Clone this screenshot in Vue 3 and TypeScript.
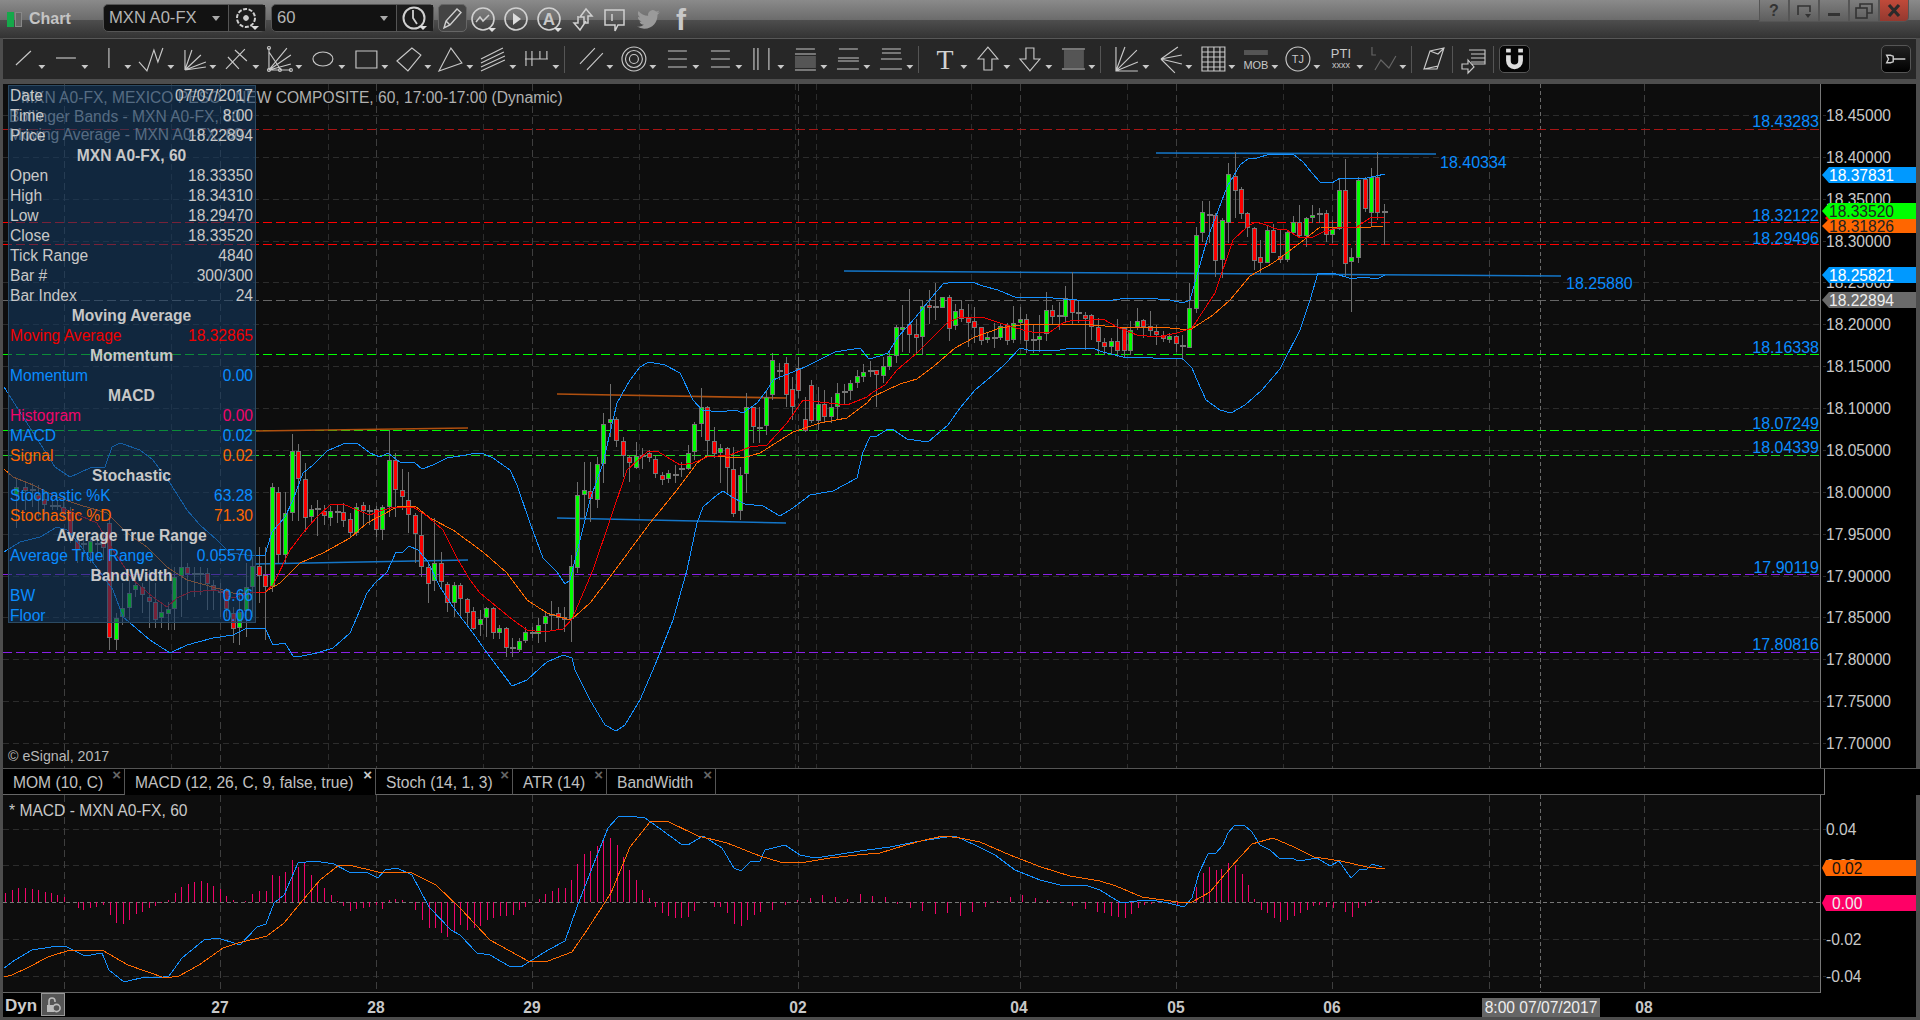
<template>
  <div class="app">
    <header class="titlebar">
      <div class="logo"><i class="logo-on"></i><i class="logo-off"></i></div>
      <span class="title">Chart</span>
      <div class="combo">
        <span class="combo-text">MXN A0-FX</span>
        <i class="caret"></i>
        <span class="combo-btn">
          <svg width="30" height="28" viewBox="0 0 30 28" class="ticon">
            <circle cx="14" cy="14" r="9" stroke-dasharray="4 1.6" stroke-width="2" />
            <circle cx="14" cy="14" r="2.4" fill="#ccc" />
            <path d="M19 22h8l-4 4z" class="fillc" />
          </svg>
        </span>
      </div>
      <div class="combo">
        <span class="combo-text">60</span>
        <i class="caret"></i>
        <span class="combo-btn">
          <svg width="30" height="28" viewBox="0 0 30 28" class="ticon">
            <circle cx="14" cy="14" r="10.5" stroke-width="2" />
            <path d="M13 6v8l4 6" stroke-width="1.8" />
            <path d="M19 22h8l-4 4z" class="fillc" />
          </svg>
        </span>
      </div>
      <div class="pencil">
        <svg width="29" height="28" viewBox="0 0 29 28" class="ticon">
          <path d="M6 24l2-7L19 5l4 3.5L12 21zM8 17l4 4" stroke-width="1.4" />
        </svg>
      </div>
      <svg v-for="t in titleIcons" :key="t.name" width="33" height="28" viewBox="0 0 33 28" class="ticon">
        <circle v-if="t.ring" cx="16" cy="14" r="11" stroke-width="1.6" />
        <path v-if="t.d" :d="t.d" stroke-width="1.5" />
        <path v-if="t.fill" :d="t.fill" class="fillc" />
        <text v-if="t.txt" x="16" :y="t.ty" class="ticon-text" :font-size="t.ts">{{ t.txt }}</text>
        <g v-if="t.bird" transform="translate(5 3) scale(.95)"><path :d="birdPath" class="bird" /></g>
      </svg>
      <div class="winbtns">
        <span class="winbtn"><b>?</b></span>
        <span class="winbtn">
          <svg width="18" height="16" viewBox="0 0 18 16" class="wicon"><path d="M3 12V3h12v6" /><path d="M10 11h6l-3 4z" fill="#333" stroke="none" /></svg>
        </span>
        <span class="winbtn">
          <svg width="18" height="16" viewBox="0 0 18 16"><rect x="3" y="10" width="12" height="3" fill="#333" /></svg>
        </span>
        <span class="winbtn">
          <svg width="20" height="18" viewBox="0 0 20 18" class="wicon"><rect x="2" y="6" width="11" height="10" /><path d="M6 6V2h12v9h-5" /></svg>
        </span>
        <span class="winbtn closebtn">
          <svg width="18" height="16" viewBox="0 0 18 16"><path d="M4 2l10 11M14 2L4 13" stroke="#2a2a2a" stroke-width="3.2" /></svg>
        </span>
      </div>
    </header>

    <nav class="toolbar">
      <template v-for="(t, i) in tools" :key="i">
        <i v-if="t.sep" class="tsep"></i>
        <svg v-else :width="t.bare ? 30 : 42.85" height="34" :viewBox="t.bare ? '6 0 30 34' : '0 0 43 34'" class="tool" :class="{ dim: t.dim }">
          <path v-if="t.fill" :d="t.fill" class="tool-fill" />
          <path v-if="t.d" :d="t.d" />
          <circle v-for="(c, j) in t.circles || []" :key="j" :cx="c[0]" :cy="c[1]" :r="c[2]" />
          <text v-for="(x, j) in t.texts || []" :key="j" :x="x.x" :y="x.y" :font-size="x.size" :class="x.cls" text-anchor="middle">{{ x.s }}</text>
          <path v-if="!t.bare" d="M36.5 23h7l-3.5 4z" class="tool-caret" />
        </svg>
      </template>
      <div class="magnet">
        <svg width="31" height="28" viewBox="0 0 31 28">
          <path d="M9 10v6a6.5 6.5 0 0 0 13 0v-6" fill="none" stroke="#ddd" stroke-width="5" />
          <rect x="6.5" y="3" width="5" height="4" fill="#ddd" />
          <rect x="19.5" y="3" width="5" height="4" fill="#ddd" />
        </svg>
      </div>
      <div class="pin">
        <svg width="30" height="28" viewBox="0 0 30 28" fill="none" stroke="#ccc" stroke-width="1.5">
          <path d="M5 10h4l3 1v6l-3 1H5l2-4zM12 14h13" />
        </svg>
      </div>
    </nav>

    <div class="panes">
      <section class="main-pane">
        <svg class="plot" width="1913" height="684" viewBox="3 84 1913 684">
          <rect x="3" y="84" width="1817" height="684" fill="#0d0d0d" />
          <rect x="1821" y="84" width="95" height="684" fill="#000" />
          <g shape-rendering="crispEdges">
            <line v-for="y in priceGrid" :key="'g' + y.y" x1="3" x2="1826" :y1="y.y" :y2="y.y" class="grid" />
            <line v-for="x in minorV" :key="'v' + x" :x1="x" :x2="x" y1="84" y2="768" class="grid" />
            <line v-for="x in majorV" :key="'m' + x" :x1="x" :x2="x" y1="84" y2="768" class="grid-major" />
            <line x1="1540" x2="1540" y1="84" y2="768" class="grid-cross" />
            <line v-for="l in levels" :key="l.y" x1="3" x2="1820" :y1="l.y" :y2="l.y" :stroke="l.color" stroke-dasharray="9 4" />
          </g>
          <line v-for="(l, i) in trendLines" :key="'t' + i" :x1="l[0]" :y1="l[1]" :x2="l[2]" :y2="l[3]" :stroke="l[4]" stroke-width="1.6" />
          <g shape-rendering="crispEdges">
            <g v-for="c in candles" :key="c.x">
              <line :x1="c.x" :x2="c.x" :y1="c.hi" :y2="c.lo" stroke="#6f6f6f" />
              <rect v-if="c.kind === 'd'" :x="c.x - 3" :y="c.top" width="6" height="2" fill="#777" />
              <rect v-else :x="c.x - 2" :y="c.top" width="4" :height="c.bot - c.top" :fill="c.kind === 'g' ? '#00ff00' : '#ff0000'" stroke="#777" />
            </g>
          </g>
          <polyline :points="upperBand" class="curve blue" />
          <polyline :points="lowerBand" class="curve blue" />
          <polyline :points="orangeMa" class="curve orange" />
          <polyline :points="redMa" class="curve red" />
          <text x="21" y="103" class="under">MXN A0-FX, MEXICO PESO - NEW COMPOSITE, 60, 17:00-17:00 (Dynamic)</text>
          <text x="9" y="121.5" class="under">Bollinger Bands - MXN A0-FX, 60</text>
          <text x="9" y="139.5" class="under">Moving Average - MXN A0-FX, 60</text>
          <text v-for="l in labelledLevels" :key="'lbl' + l.label" x="1819" :y="l.ty" class="level-label" text-anchor="end">{{ l.label }}</text>
          <text x="1440" y="167.5" class="level-label">18.40334</text>
          <text x="1566" y="288.5" class="level-label">18.25880</text>
          <text x="8" y="761" class="copy">© eSignal, 2017</text>
          <text v-for="y in priceGrid" :key="'a' + y.y" x="1826" :y="y.y + 5.5" class="axis-label">{{ y.label }}</text>
          <line x1="1820.5" x2="1820.5" y1="84" y2="768" stroke="#777" />
          <path d="M1825 218l3-3 3 3-3 3z" fill="#f00" />
          <g v-for="t in tags" :key="t.label">
            <path :d="`M1822 ${t.y + t.h / 2}l7-${t.h / 2}h87v${t.h}h-87z`" :fill="t.color" />
            <text x="1829" :y="t.y + t.h / 2 + 5.5" class="tag-text" :fill="t.ink">{{ t.label }}</text>
          </g>
        </svg>
        <aside class="readout">
          <div v-for="r in readout" :key="r.label + r.value" class="row" :class="{ head: !r.value }" :style="{ color: r.color }">
            <span>{{ r.label }}</span><span>{{ r.value }}</span>
          </div>
        </aside>
      </section>

      <div class="tabs">
        <div v-for="t in tabs" :key="t.label" class="tab" :class="{ active: t.active }" :style="{ width: t.w + 'px' }">
          {{ t.label }}<b class="tab-x">×</b>
        </div>
        <div class="tabs-rest"></div>
        <div class="tabs-axis"></div>
      </div>

      <section class="macd-pane">
        <svg width="1913" height="198" viewBox="3 795 1913 198">
          <rect x="3" y="795" width="1817" height="198" fill="#0d0d0d" />
          <rect x="1821" y="795" width="95" height="198" fill="#000" />
          <g shape-rendering="crispEdges">
            <line v-for="y in macdGrid" :key="'mg' + y.y" x1="3" x2="1826" :y1="y.y" :y2="y.y" class="grid" />
            <line x1="3" x2="1826" y1="902" y2="902" class="zero" />
            <line v-for="x in majorV" :key="'mv' + x" :x1="x" :x2="x" y1="795" y2="993" class="grid-major" />
            <line x1="1540" x2="1540" y1="795" y2="993" class="grid-cross" />
            <line v-for="b in histogram" :key="b[0]" :x1="b[0]" :x2="b[0]" y1="902" :y2="b[1]" stroke="#f0056a" />
          </g>
          <polyline :points="macdLine" class="curve blue" />
          <polyline :points="signalLine" class="curve orange" />
          <text x="9" y="816" class="axis-label">* MACD - MXN A0-FX, 60</text>
          <text v-for="y in macdGrid" :key="'ma' + y.y" x="1826" :y="y.y + 5.5" class="axis-label">{{ y.label }}</text>
          <line x1="3" x2="1821" y1="992.5" y2="992.5" stroke="#666" />
          <line x1="1820.5" x2="1820.5" y1="795" y2="993" stroke="#777" />
          <path d="M1822 868l4-8h90v16h-90z" fill="#ff6600" />
          <text x="1832" y="873.5" class="axis-label tag-dark">0.02</text>
          <path d="M1822 903l4-8h90v16h-90z" fill="#ff0066" />
          <text x="1832" y="908.5" class="axis-label tag-light">0.00</text>
        </svg>
      </section>

      <footer class="xaxis">
        <span class="dyn">Dyn</span>
        <span class="lock">
          <svg width="18" height="18" viewBox="0 0 18 18" fill="none" stroke="#bbb" stroke-width="1.6">
            <path d="M5 9V5a3 3 0 0 1 6 0v1" /><rect x="3" y="9" width="7" height="7" fill="#bbb" stroke="none" /><circle cx="12.5" cy="12" r="3.6" fill="#555" />
          </svg>
        </span>
        <svg width="1848" height="24" viewBox="68 993 1848 24">
          <text v-for="d in dateLabels" :key="d[0]" :x="d[1]" y="1013" class="date" text-anchor="middle">{{ d[0] }}</text>
          <rect x="1482" y="998" width="118" height="19" fill="#666" />
          <text x="1541" y="1013" class="axis-label tag-light" text-anchor="middle">8:00 07/07/2017</text>
        </svg>
      </footer>
    </div>
  </div>
</template>

<script setup lang="ts">
type Raw = [number, number, number, number, number, string];
type Pt = [number, number];
type Tool = {
  d?: string;
  fill?: string;
  sep?: boolean;
  bare?: boolean;
  dim?: boolean;
  circles?: [number, number, number][];
  texts?: { x: number; y: number; size: number; s: string; cls: string }[];
};

const birdPath =
  "M23.953 4.57a10 10 0 01-2.825.775 4.958 4.958 0 002.163-2.723c-.951.555-2.005.959-3.127 1.184a4.92 4.92 0 00-8.384 4.482C7.69 8.095 4.067 6.13 1.64 3.162a4.822 4.822 0 00-.666 2.475c0 1.71.87 3.213 2.188 4.096a4.904 4.904 0 01-2.228-.616v.06a4.923 4.923 0 003.946 4.827 4.996 4.996 0 01-2.212.085 4.936 4.936 0 004.604 3.417 9.867 9.867 0 01-6.102 2.105c-.39 0-.779-.023-1.17-.067a13.995 13.995 0 007.557 2.209c9.053 0 13.998-7.496 13.998-13.985 0-.21 0-.42-.015-.63A9.935 9.935 0 0024 4.59z";

const titleIcons = [
  { name: "chart", ring: true, d: "M9 17l4-5 3 4 6-6", fill: "M21 23h8l-4 4z" },
  { name: "play", ring: true, fill: "M13 8l8 6-8 6z", d: "" },
  { name: "auto", ring: true, txt: "A", ty: 20, ts: 17, fill: "M21 23h8l-4 4z" },
  { name: "swap", d: "M14 12l6-8 6 7h-4v7h-4v-6zM20 16l-6 9-6-7h4v-7" },
  { name: "note", d: "M6 5h19v15h-6l-3 6v-6H6zM13 9v7" },
  { name: "tw", bird: true },
  { name: "fb", txt: "f", ty: 25, ts: 30 },
];

const tx = (x: number, y: number, size: number, s: string, cls = "tool-text") => ({ x, y, size, s, cls });

const tools: Tool[] = [
  { d: "M14 23L29 9" },
  { d: "M11 16H31" },
  { d: "M21 6V26" },
  { d: "M8 20L16 29L23 8L27 20L32 6" },
  { d: "M12 28V8M12 28L19 8M12 28L28 13M12 28L33 20M12 28L33 25" },
  { d: "M12 15L23 27M19 8L31 19M10 27L29 7" },
  { d: "M10 6V28H32M10 28L28 6M10 28L32 13M10 28L32 22M10 10L22 28", circles: [[10, 6, 1.5], [10, 28, 1.5], [21, 28, 1.5], [32, 28, 1.5]] },
  { d: "M11 17a10 7 0 1 0 20 0a10 7 0 1 0 -20 0" },
  { d: "M11 9H32V26H11Z" },
  { d: "M9 19L24 6L33 13L20 29Z" },
  { d: "M9 29L21 6L32 21Z" },
  { d: "M8 17L30 6M8 21L31 10M8 25L32 14M8 29L32 18" },
  { d: "M10 9V24M16 9V24M24 9V17M31 9V17M9 17H32" },
  { sep: true },
  { d: "M10 22L25 6M17 28L33 11" },
  { d: "", circles: [[21, 17, 12], [21, 17, 8.5], [21, 17, 4.5]] },
  { d: "M12 9H31M12 17H31M12 25H31" },
  { d: "M12 9H31M12 17H31M12 25H31" },
  { d: "M13 6V28M17 6V28M28 6V28" },
  { fill: "M11 14H32V26H11Z", d: "M12 7H31M11 12H32M11 28H32" },
  { d: "M12 7H31M11 16H32M11 19H32M10 27H32" },
  { d: "M12 7H31M12 11H31M11 17H32M10 27H32" },
  { sep: true },
  { d: "", texts: [tx(21, 27, 28, "T", "tool-serif")] },
  { d: "M21 5L31 17H25V28H17V17H11Z" },
  { d: "M17 6H25V17H31L21 29L11 17H17Z" },
  { fill: "M12 8H32V26H12Z", d: "M10 7H33M10 27H33" },
  { sep: true },
  { d: "M10 5V29H32M10 29L31 8M10 29L19 5M10 29L32 20" },
  { d: "M12 17L29 5M12 17L33 13M12 17L33 22M12 17L26 31" },
  { d: "M10 5H33V29H10ZM10 10H33M10 15H33M10 20H33M10 25H33M16 5V29M22 5V29M28 5V29" },
  { fill: "M9 8H33V13H9Z", d: "", texts: [tx(21, 27, 11, "MOB", "tool-text")] },
  { d: "", circles: [[21, 17, 12]], texts: [tx(21, 21, 11, "TJ", "tool-text")] },
  { d: "", texts: [tx(21, 16, 13, "PTI", "tool-text"), tx(21, 26, 9, "xxxx", "tool-text")] },
  { d: "M9 5V13H13M12 28L18 18L26 26L33 14", dim: true },
  { sep: true },
  { bare: true, d: "M13 27L19 9L33 6L27 24ZM19 9L27 12L33 6M13 27H26L27 24" },
  { sep: true },
  { bare: true, d: "M17 8H33V22H19M19 12H33M19 16H33M19 20H33M10 22H16V18L22 25L16 31V27H10Z" },
  { sep: true },
];

const yOf = (i: number) => Math.round(115 + 41.87 * i);
const priceGrid = Array.from({ length: 16 }, (_, i) => ({
  y: yOf(i) + 0.5,
  label: (18.45 - 0.05 * i).toFixed(5),
}));
const minorV = [171.5, 328.5, 483.5, 639.5, 795.5, 816.5, 971.5, 1127.5, 1283.5];
const majorV = [64.5, 220.5, 376.5, 532.5, 798.5, 1020.5, 1176.5, 1332.5, 1489.5, 1644.5];

const levels = [
  { label: "18.43283", y: 129.5, ty: 127, color: "#a81515" },
  { label: "18.32122", y: 222.5, ty: 221, color: "#ff0000" },
  { label: "18.29496", y: 244.5, ty: 243.5, color: "#ff0000" },
  { label: "", y: 300.5, ty: 0, color: "#666666" },
  { label: "18.16338", y: 354.5, ty: 353, color: "#00ff00" },
  { label: "18.07249", y: 430.5, ty: 428.5, color: "#00ff00" },
  { label: "18.04339", y: 455.5, ty: 453, color: "#22dd22" },
  { label: "17.90119", y: 574.5, ty: 572.5, color: "#8a1fe6" },
  { label: "17.80816", y: 652.5, ty: 650, color: "#8a1fe6" },
];
const labelledLevels = levels.filter((l) => l.label);

const trendLines: [number, number, number, number, string][] = [
  [1156, 153, 1436, 154, "#1476c8"],
  [844, 271, 1561, 276, "#1476c8"],
  [255, 431, 468, 428, "#b0500f"],
  [557, 394, 786, 398, "#b0500f"],
  [557, 518, 786, 523, "#1476c8"],
  [255, 564, 468, 560, "#1476c8"],
];

const crop = (x0: number, y0: number, rows: Raw[]) =>
  rows.map(([x, top, bot, hi, lo, kind]) => ({
    x: Math.round(x0 + x / 3) + 0.5,
    top: Math.round(y0 + top / 3),
    bot: Math.round(y0 + bot / 3),
    hi: Math.round(y0 + hi / 3),
    lo: Math.round(y0 + lo / 3),
    kind,
  }));

const candles = [
  ...crop(0, 350, [
    [48, 411, 432, 385, 535, "g"], [76, 412, 420, 395, 480, "r"], [96, 418, 423, 400, 470, "d"],
    [115, 435, 447, 405, 500, "r"], [133, 448, 462, 420, 510, "r"], [155, 465, 468, 445, 480, "d"],
    [172, 465, 468, 450, 480, "d"], [190, 470, 490, 440, 510, "r"], [210, 490, 548, 470, 580, "r"],
    [232, 570, 598, 550, 640, "r"], [250, 580, 583, 560, 620, "d"], [270, 572, 605, 560, 640, "g"],
    [290, 580, 583, 560, 620, "d"], [310, 565, 590, 550, 630, "r"], [328, 520, 862, 505, 900, "r"],
    [349, 805, 868, 790, 900, "g"], [367, 775, 797, 700, 825, "g"], [388, 728, 772, 690, 810, "g"],
    [406, 706, 716, 690, 740, "g"], [427, 710, 731, 700, 790, "r"], [446, 740, 752, 660, 835, "r"],
    [466, 755, 808, 700, 835, "r"], [484, 785, 802, 755, 835, "g"], [505, 778, 790, 755, 840, "g"],
    [523, 682, 775, 650, 840, "g"], [544, 652, 675, 570, 800, "g"], [562, 652, 670, 640, 750, "r"],
    [583, 670, 673, 650, 740, "d"], [601, 668, 671, 650, 735, "d"], [622, 668, 700, 655, 780, "r"],
    [640, 705, 718, 690, 780, "r"], [661, 724, 727, 700, 800, "d"], [679, 720, 775, 715, 800, "r"],
    [700, 788, 835, 770, 880, "r"], [718, 785, 832, 720, 885, "g"], [739, 712, 780, 640, 860, "g"],
    [757, 647, 708, 620, 800, "g"], [778, 647, 676, 590, 760, "r"], [796, 675, 708, 590, 870, "r"],
    [817, 410, 708, 400, 725, "g"], [835, 425, 612, 410, 640, "r"],
  ]),
  ...crop(280, 430, [
    [16, 250, 373, 185, 400, "g"], [35, 62, 247, 12, 272, "g"], [55, 64, 145, 42, 272, "r"],
    [74, 146, 260, 100, 305, "r"], [94, 238, 257, 225, 280, "g"], [112, 235, 240, 210, 318, "d"],
    [133, 242, 256, 225, 285, "r"], [151, 242, 260, 228, 288, "g"], [172, 243, 247, 225, 280, "d"],
    [190, 247, 271, 220, 290, "r"], [211, 268, 307, 250, 320, "r"], [229, 230, 307, 220, 318, "g"],
    [250, 224, 241, 215, 285, "r"], [268, 240, 245, 225, 285, "d"], [289, 238, 298, 228, 320, "r"],
    [307, 232, 296, 225, 330, "g"], [328, 91, 229, 0, 260, "g"], [346, 91, 178, 70, 260, "r"],
    [367, 181, 199, 118, 240, "r"], [385, 211, 253, 125, 310, "r"], [406, 256, 310, 250, 400, "r"],
    [424, 314, 409, 250, 440, "r"], [445, 412, 460, 400, 518, "r"], [463, 400, 451, 265, 483, "g"],
    [484, 400, 454, 365, 480, "r"], [502, 463, 517, 455, 545, "r"], [523, 466, 515, 455, 560, "g"],
    [541, 466, 505, 460, 560, "r"], [562, 508, 545, 505, 590, "r"], [580, 544, 593, 530, 600, "r"],
    [601, 568, 583, 540, 618, "g"], [619, 535, 562, 530, 620, "g"], [640, 535, 607, 530, 628, "r"],
    [658, 595, 607, 585, 628, "g"], [679, 595, 652, 590, 680, "r"], [697, 652, 656, 625, 680, "d"],
    [718, 634, 658, 625, 665, "g"], [736, 607, 631, 590, 640, "g"], [757, 605, 609, 590, 625, "d"],
    [775, 584, 610, 563, 640, "g"], [796, 559, 580, 545, 635, "g"], [814, 553, 557, 513, 600, "d"],
    [835, 550, 560, 530, 600, "r"], [853, 562, 568, 530, 605, "r"], [874, 409, 565, 375, 635, "g"],
    [892, 196, 412, 155, 430, "g"], [913, 181, 193, 97, 265, "g"], [931, 184, 205, 97, 275, "r"],
    [952, 103, 207, 82, 235, "g"],
  ]),
  ...crop(560, 380, [
    [130, 131, 250, 100, 310, "g"], [151, 118, 127, 13, 170, "g"], [169, 118, 181, 112, 200, "r"],
    [190, 184, 224, 170, 290, "r"], [208, 232, 247, 225, 305, "r"], [229, 227, 262, 187, 268, "g"],
    [247, 224, 229, 205, 268, "d"], [268, 220, 232, 210, 245, "r"], [286, 236, 280, 228, 295, "r"],
    [307, 284, 296, 275, 315, "r"], [325, 278, 295, 270, 310, "g"], [346, 283, 287, 255, 310, "d"],
    [364, 265, 268, 245, 292, "d"], [385, 218, 265, 195, 270, "g"], [403, 133, 214, 125, 240, "g"],
    [424, 82, 130, 25, 170, "g"], [442, 80, 181, 78, 230, "r"], [463, 184, 218, 142, 235, "r"],
    [481, 203, 217, 193, 310, "g"], [502, 203, 262, 200, 340, "r"], [520, 266, 398, 200, 410, "r"],
    [541, 284, 391, 260, 420, "g"], [559, 82, 280, 38, 340, "g"], [580, 82, 139, 82, 190, "r"],
    [598, 142, 146, 80, 190, "d"], [619, 52, 136, 30, 165, "g"], [637, -60, 43, -80, 60, "g"],
    [658, -30, -26, -50, 0, "d"], [677, -50, 43, -70, 80, "r"], [697, 28, 77, -10, 120, "r"],
    [715, -35, 30, -70, 55, "r"], [736, 118, 149, 50, 155, "r"], [754, 16, 121, 0, 130, "r"],
    [775, 73, 121, 20, 150, "g"], [793, 73, 107, 30, 130, "r"], [814, 82, 109, 50, 130, "g"],
    [832, 38, 79, 10, 120, "g"], [853, 33, 37, 12, 75, "d"], [871, 10, 31, 0, 60, "g"],
    [892, -12, 7, -30, 25, "g"],
  ]),
  ...crop(860, 240, [
    [10, 397, 407, 373, 425, "g"], [30, 391, 395, 362, 410, "d"], [49, 391, 403, 390, 500, "r"],
    [70, 379, 404, 350, 430, "g"], [88, 349, 377, 330, 390, "g"], [109, 262, 346, 255, 370, "g"],
    [127, 260, 268, 195, 335, "g"], [148, 253, 281, 148, 340, "r"], [169, 283, 290, 237, 340, "r"],
    [187, 199, 287, 180, 345, "g"], [208, 196, 202, 150, 252, "r"], [226, 198, 203, 128, 240, "d"],
    [247, 172, 202, 170, 205, "g"], [266, 172, 265, 165, 303, "r"], [286, 212, 256, 192, 270, "g"],
    [304, 208, 233, 180, 247, "r"], [325, 235, 245, 192, 322, "r"], [343, 244, 260, 200, 310, "r"],
    [364, 262, 299, 260, 315, "r"], [382, 292, 298, 278, 310, "g"], [403, 292, 296, 248, 323, "d"],
    [421, 257, 290, 248, 300, "g"], [442, 256, 301, 250, 315, "r"], [460, 248, 298, 198, 308, "g"],
    [481, 238, 245, 200, 300, "g"], [499, 238, 301, 222, 340, "r"], [520, 298, 302, 255, 340, "d"],
    [538, 289, 296, 225, 335, "g"], [559, 211, 280, 155, 303, "g"], [577, 211, 227, 195, 255, "r"],
    [598, 226, 230, 185, 270, "d"], [616, 175, 227, 138, 250, "g"], [637, 176, 217, 97, 255, "r"],
    [655, 216, 220, 180, 250, "d"], [676, 224, 233, 215, 330, "r"], [694, 226, 259, 222, 300, "r"],
    [715, 260, 304, 235, 342, "r"], [733, 306, 317, 295, 345, "r"], [754, 302, 317, 293, 345, "g"],
    [772, 302, 329, 238, 350, "r"], [793, 263, 331, 263, 355, "r"], [811, 271, 331, 243, 345, "g"],
    [832, 244, 259, 205, 270, "g"], [850, 241, 257, 238, 295, "r"], [871, 259, 271, 213, 290, "r"],
    [889, 274, 281, 255, 315, "r"], [910, 284, 295, 273, 305, "r"], [928, 289, 296, 278, 310, "g"],
    [949, 289, 310, 285, 335, "r"],
  ]),
  ...crop(1100, 130, [
    [247, 645, 647, 615, 690, "d"], [268, 535, 650, 460, 650, "g"], [287, 316, 533, 290, 550, "g"],
    [307, 247, 307, 213, 335, "g"], [326, 253, 257, 213, 340, "d"], [346, 256, 391, 250, 440, "r"],
    [365, 271, 388, 265, 445, "g"], [385, 133, 275, 100, 340, "g"], [404, 139, 181, 67, 265, "r"],
    [424, 178, 250, 170, 268, "r"], [442, 250, 292, 245, 320, "r"], [463, 295, 389, 290, 420, "r"],
    [481, 382, 395, 330, 430, "r"], [502, 301, 397, 285, 398, "g"], [520, 301, 365, 283, 370, "r"],
    [541, 379, 388, 300, 400, "r"], [560, 307, 388, 300, 395, "g"], [580, 277, 305, 258, 310, "g"],
    [598, 277, 316, 225, 320, "r"], [619, 265, 316, 262, 350, "g"], [637, 254, 262, 225, 278, "g"],
    [658, 250, 254, 235, 280, "d"], [677, 250, 313, 240, 335, "r"], [697, 298, 313, 270, 340, "g"],
    [716, 181, 295, 148, 300, "g"], [736, 181, 400, 88, 440, "r"], [754, 382, 394, 355, 545, "g"],
    [775, 151, 380, 140, 400, "g"], [794, 148, 235, 140, 245, "r"], [814, 142, 245, 115, 290, "g"],
    [832, 142, 245, 67, 270, "r"], [853, 244, 247, 222, 345, "d"],
  ]),
];

const toPoints = (pts: Pt[]) => pts.map((p) => p.join(",")).join(" ");

const upperBand = toPoints([
  [4, 387], [55, 467], [70, 477], [90, 468], [105, 467], [112, 447], [120, 443], [140, 450], [153, 460],
  [170, 483], [187, 510], [200, 525], [217, 540], [230, 553], [247, 555], [265, 555], [272, 532],
  [285, 517], [293, 500], [303, 473], [313, 465], [327, 451], [343, 444], [357, 443], [370, 453],
  [380, 457], [388, 453], [400, 462], [415, 463], [422, 469], [433, 465], [447, 458], [460, 456],
  [477, 453], [482, 453], [493, 458], [510, 470], [517, 485], [530, 523], [543, 558], [557, 572],
  [565, 584], [570, 580], [580, 540], [590, 500], [603, 463], [617, 403], [630, 380], [640, 367],
  [649, 362], [665, 365], [680, 373], [693, 400], [702, 410], [720, 412], [735, 410], [743, 413],
  [757, 403], [767, 390], [773, 380], [805, 367], [835, 352], [860, 348], [869, 359], [880, 356],
  [888, 353], [893, 345], [898, 337], [915, 318], [932, 297], [943, 284], [953, 282], [972, 282],
  [983, 286], [998, 290], [1017, 298], [1043, 297], [1063, 299], [1077, 300], [1093, 301], [1113, 300],
  [1127, 298], [1145, 298], [1170, 300], [1183, 303], [1190, 300], [1207, 240], [1227, 187], [1240, 165],
  [1248, 159], [1257, 158], [1270, 154], [1293, 154], [1303, 162], [1312, 173], [1320, 182], [1332, 183],
  [1340, 178], [1367, 178], [1385, 174],
]);

const lowerBand = toPoints([
  [4, 552], [20, 542], [40, 537], [57, 527], [67, 530], [80, 545], [95, 565], [113, 590], [123, 617],
  [150, 640], [170, 653], [187, 645], [213, 638], [233, 635], [247, 628], [265, 628], [273, 645],
  [285, 643], [293, 656], [302, 656], [317, 653], [333, 648], [350, 633], [360, 610], [367, 593],
  [375, 583], [387, 572], [396, 552], [403, 552], [409, 546], [418, 550], [428, 562], [440, 587],
  [453, 607], [473, 633], [487, 653], [500, 670], [512, 686], [527, 680], [540, 668], [547, 662],
  [563, 655], [572, 658], [575, 670], [590, 700], [605, 725], [616, 731], [625, 725], [640, 700],
  [655, 665], [673, 620], [687, 570], [697, 523], [703, 507], [717, 495], [723, 491], [732, 497],
  [745, 504], [763, 506], [780, 516], [793, 508], [810, 495], [833, 491], [857, 478], [863, 452],
  [870, 437], [877, 436], [888, 429], [892, 429], [907, 439], [928, 442], [948, 425], [960, 408],
  [975, 390], [993, 375], [1005, 364], [1020, 348], [1032, 351], [1060, 350], [1073, 348], [1092, 348],
  [1103, 352], [1123, 357], [1183, 359], [1192, 368], [1197, 380], [1206, 400], [1220, 410], [1231, 413],
  [1245, 405], [1262, 390], [1280, 369], [1300, 330], [1310, 300], [1318, 273], [1333, 273], [1352, 279],
  [1363, 277], [1377, 279], [1385, 275],
]);

const redMa = toPoints([
  [60, 507], [97, 523], [113, 550], [133, 580], [153, 597], [167, 607], [177, 598], [190, 592], [217, 590],
  [233, 598], [250, 593], [265, 592], [273, 585], [290, 550], [303, 533], [317, 517], [330, 505], [343, 504],
  [357, 510], [370, 515], [383, 510], [395, 507], [413, 507], [427, 516], [443, 530], [457, 558], [470, 580],
  [480, 593], [497, 607], [513, 620], [527, 630], [543, 632], [563, 629], [572, 619], [593, 570], [610, 520],
  [627, 470], [647, 452], [657, 451], [667, 457], [680, 465], [693, 463], [707, 457], [730, 455], [750, 447],
  [767, 445], [787, 423], [803, 400], [820, 402], [847, 405], [867, 397], [873, 392], [885, 385], [897, 370],
  [917, 353], [933, 337], [947, 323], [960, 317], [982, 317], [1000, 323], [1023, 330], [1037, 333], [1050, 332],
  [1063, 323], [1073, 320], [1090, 320], [1103, 319], [1117, 327], [1137, 335], [1157, 337], [1177, 333],
  [1192, 328], [1215, 293], [1233, 240], [1247, 227], [1255, 222], [1263, 224], [1277, 229], [1287, 230],
  [1300, 238], [1313, 237], [1323, 232], [1340, 227], [1357, 227], [1370, 218], [1384, 217],
]);

const orangeMa = toPoints([
  [4, 469], [13, 477], [33, 485], [57, 497], [80, 505], [107, 513], [127, 533], [147, 547], [167, 567],
  [187, 580], [213, 587], [233, 593], [250, 593], [265, 592], [280, 583], [300, 563], [323, 553], [350, 538],
  [367, 523], [397, 507], [415, 506], [430, 518], [453, 530], [483, 552], [507, 573], [527, 600], [547, 613],
  [567, 619], [572, 619], [590, 603], [610, 577], [650, 523], [677, 490], [697, 463], [707, 456], [743, 458],
  [760, 453], [793, 432], [820, 423], [847, 418], [867, 403], [872, 397], [900, 384], [917, 379], [933, 367],
  [955, 348], [975, 337], [1000, 328], [1027, 324], [1060, 324], [1093, 325], [1117, 327], [1160, 327],
  [1190, 330], [1213, 315], [1230, 300], [1250, 276], [1273, 263], [1300, 243], [1320, 227], [1360, 228],
  [1383, 226],
]);

const fromZoom = (pts: Pt[]): Pt[] => pts.map(([x, y]) => [Math.round(x / 2.063), Math.round(750 + y / 3)]);

const macdLine = toPoints([
  ...fromZoom([
    [8, 653], [30, 630], [65, 600], [120, 587], [135, 587], [175, 618], [210, 610], [225, 660], [255, 697],
    [300, 680], [325, 685], [348, 678], [375, 625], [420, 570], [450, 563], [495, 585], [530, 530], [548, 522],
    [565, 460], [585, 435], [615, 340], [650, 334], [690, 343], [720, 367], [755, 367], [780, 383], [795, 360],
    [820, 355], [850, 375], [885, 470], [930, 540], [950, 555], [985, 610], [1010, 615], [1050, 648], [1075, 650],
    [1130, 600], [1165, 573], [1190, 470], [1225, 340], [1255, 235], [1275, 200], [1295, 197], [1330, 205],
    [1360, 235], [1405, 283], [1420, 285], [1450, 258], [1490, 295], [1515, 355], [1528, 363], [1548, 335],
    [1568, 332],
  ]),
  [765, 850], [785, 845], [800, 855], [815, 858], [835, 855], [860, 851], [890, 847], [915, 842], [940, 838],
  [955, 836], [975, 845], [995, 855], [1015, 870], [1040, 880], [1060, 885], [1085, 885], [1100, 890], [1108, 895],
  [1121, 903], [1137, 901], [1152, 900], [1168, 903], [1184, 907], [1192, 898], [1199, 873], [1208, 854], [1216, 853],
  [1223, 845], [1228, 833], [1235, 825], [1244, 825], [1252, 832], [1260, 845], [1270, 850], [1280, 859], [1291, 858],
  [1299, 861], [1317, 858], [1330, 866], [1339, 861], [1351, 878], [1359, 870], [1367, 869], [1372, 864], [1382, 867],
]);

const signalLine = toPoints([
  ...fromZoom([
    [8, 680], [25, 675], [60, 650], [100, 622], [145, 600], [210, 600], [265, 645], [340, 685], [370, 678],
    [410, 645], [460, 595], [490, 578], [550, 558], [585, 520], [625, 450], [660, 390], [700, 345], [720, 345],
    [780, 365], [850, 370], [900, 405], [950, 475], [1010, 570], [1090, 633], [1130, 633], [1180, 605], [1210, 540],
    [1260, 430], [1300, 290], [1340, 215], [1375, 213], [1440, 258], [1500, 280], [1568, 318],
  ]),
  [780, 862], [800, 863], [830, 858], [857, 855], [880, 853], [906, 845], [925, 840], [943, 836], [960, 838],
  [980, 842], [1010, 855], [1041, 867], [1070, 876], [1100, 881], [1116, 886], [1142, 897], [1178, 902], [1192, 902],
  [1210, 892], [1231, 867], [1252, 844], [1273, 838], [1294, 847], [1314, 857], [1341, 861], [1367, 867], [1385, 869],
]);

const barsA: [number, number][] = [
  [10, 428], [25, 420], [38, 415], [52, 415], [65, 417], [78, 420], [92, 427], [105, 430], [118, 435], [132, 440],
  [160, 475], [172, 480], [185, 475], [198, 470], [212, 465], [226, 495], [240, 520], [253, 522], [266, 510],
  [280, 492], [293, 485], [307, 475], [320, 468], [333, 460], [347, 450], [360, 430], [373, 412], [387, 403],
  [400, 397], [414, 393], [427, 400], [440, 407], [453, 417], [467, 437], [480, 450], [506, 453], [520, 432],
  [534, 422], [548, 422], [561, 375], [575, 378], [588, 365], [602, 330], [615, 350], [628, 335], [642, 375],
  [655, 400], [668, 415], [682, 435], [695, 452], [708, 467], [722, 482], [735, 478], [749, 475], [762, 472],
  [775, 466], [789, 478], [802, 450], [815, 447], [829, 450], [842, 455], [856, 480], [870, 510], [884, 535],
  [897, 535], [910, 548], [923, 560], [937, 545], [950, 525], [964, 540], [977, 535], [990, 528], [1004, 510],
  [1018, 505], [1031, 498], [1044, 497], [1058, 495], [1071, 480], [1084, 470], [1111, 447], [1125, 432],
  [1138, 422], [1151, 415], [1165, 413], [1178, 390], [1191, 342], [1205, 312], [1218, 302], [1232, 288],
  [1245, 265], [1258, 265], [1272, 285], [1285, 322], [1298, 360], [1312, 390], [1325, 420], [1339, 445],
  [1352, 470], [1365, 490], [1378, 497], [1392, 505], [1405, 505], [1419, 500], [1432, 482], [1473, 470],
  [1486, 472], [1500, 488], [1514, 522], [1528, 527], [1541, 510], [1555, 495],
];
const barsB: [number, number][] = [
  [8, 430], [21, 437], [34, 440], [47, 445], [60, 432], [72, 415], [84, 405], [97, 402], [110, 400], [122, 398],
  [134, 400], [147, 405], [172, 395], [183, 350], [196, 310], [208, 290], [221, 300], [232, 297], [245, 280],
  [258, 285], [271, 312], [283, 345], [295, 387], [307, 420], [320, 428], [333, 443], [345, 455], [358, 450],
  [370, 437], [382, 430], [395, 420], [407, 407], [419, 405], [432, 412], [445, 413], [469, 427], [481, 440],
  [494, 413], [506, 407], [519, 390], [532, 392],
];
// middle stretch, read off the smaller picture: [x, height above zero]
const envelope: Pt[] = [
  [760, -10], [772, -8], [785, -3], [797, 2], [810, 4], [822, 7], [835, 5], [847, 3], [860, 8], [872, 6], [885, 5],
  [897, -2], [910, -6], [922, -9], [935, -12], [947, -11], [960, -14], [972, -10], [985, -5], [997, 1], [1010, 5],
  [1022, 7], [1035, 4], [1047, 2], [1060, -1], [1072, -4], [1085, -7], [1097, -10],
];
const histogram: [number, number][] = [
  ...barsA.map(([x, z]): [number, number] => [Math.round(x / 2.063) + 0.5, Math.round(750 + z / 3)]),
  ...envelope.map(([x, h]): [number, number] => [x + 0.5, 902 - h]),
  ...barsB.map(([x, z]): [number, number] => [Math.round(1100 + x / 1.912) + 0.5, Math.round(770 + z / 3)]),
];

const macdGrid = [
  { y: 829.5, label: "0.04" },
  { y: 865.5, label: "0.02" },
  { y: 939.5, label: "-0.02" },
  { y: 976.5, label: "-0.04" },
];

const tags = [
  { label: "18.22894", y: 292, h: 16, color: "#6a6a6a", ink: "#eee" },
  { label: "18.25821", y: 267, h: 16, color: "#0099ff", ink: "#fff" },
  { label: "18.37831", y: 167, h: 16, color: "#0099ff", ink: "#fff" },
  { label: "18.31826", y: 219, h: 14, color: "#ff6600", ink: "#222" },
  { label: "18.33520", y: 203, h: 16, color: "#00ff00", ink: "#222" },
];

const BLUE = "#0a8cff";
const RED = "#f00000";
const PINK = "#f0056a";
const ORANGE = "#ff6600";
const readout = [
  { label: "Date", value: "07/07/2017" },
  { label: "Time", value: "8:00" },
  { label: "Price", value: "18.22894" },
  { label: "MXN A0-FX, 60", value: "" },
  { label: "Open", value: "18.33350" },
  { label: "High", value: "18.34310" },
  { label: "Low", value: "18.29470" },
  { label: "Close", value: "18.33520" },
  { label: "Tick Range", value: "4840" },
  { label: "Bar #", value: "300/300" },
  { label: "Bar Index", value: "24" },
  { label: "Moving Average", value: "" },
  { label: "Moving Average", value: "18.32865", color: RED },
  { label: "Momentum", value: "" },
  { label: "Momentum", value: "0.00", color: BLUE },
  { label: "MACD", value: "" },
  { label: "Histogram", value: "0.00", color: PINK },
  { label: "MACD", value: "0.02", color: BLUE },
  { label: "Signal", value: "0.02", color: ORANGE },
  { label: "Stochastic", value: "" },
  { label: "Stochastic %K", value: "63.28", color: BLUE },
  { label: "Stochastic %D", value: "71.30", color: ORANGE },
  { label: "Average True Range", value: "" },
  { label: "Average True Range", value: "0.05570", color: BLUE },
  { label: "BandWidth", value: "" },
  { label: "BW", value: "0.66", color: BLUE },
  { label: "Floor", value: "0.00", color: BLUE },
];

const tabs = [
  { label: "MOM (10, C)", w: 122, active: false },
  { label: "MACD (12, 26, C, 9, false, true)", w: 251, active: true },
  { label: "Stoch (14, 1, 3)", w: 137, active: false },
  { label: "ATR (14)", w: 94, active: false },
  { label: "BandWidth", w: 109, active: false },
];

const dateLabels: [string, number][] = [
  ["27", 220], ["28", 376], ["29", 532], ["02", 798], ["04", 1019], ["05", 1176], ["06", 1332], ["08", 1644],
];
</script>

<style>
html,
body {
  margin: 0;
  background: #4d4d4d;
}
</style>

<style scoped>
.app {
  width: 1920px;
  height: 1020px;
  overflow: hidden;
  display: flex;
  flex-direction: column;
  background: #4d4d4d;
  font-family: "Liberation Sans", Arial, sans-serif;
  font-size: 15.6px;
  color: #c8c8c8;
}

.titlebar {
  height: 38px;
  display: flex;
  align-items: center;
  padding-left: 7px;
  background: linear-gradient(#8a8a8a 0, #6c6c6c 52%, #4e4e4e 52%, #333 100%);
}
.logo {
  display: flex;
  gap: 1px;
  width: 15px;
  height: 15px;
  flex: none;
}
.logo i {
  width: 7px;
  display: block;
}
.logo-on {
  background: #15a84a;
}
.logo-off {
  background: #666;
  border: 1px solid #888;
  box-sizing: border-box;
}
.title {
  width: 81px;
  flex: none;
  box-sizing: border-box;
  padding-left: 7px;
  font-weight: bold;
  font-size: 16px;
  color: #c4c4c4;
}
.combo {
  width: 163px;
  height: 28px;
  margin-right: 5px;
  display: flex;
  align-items: center;
  box-sizing: border-box;
  background: #121212;
  border: 1px solid #555;
  border-radius: 5px;
  position: relative;
  top: -1px;
}
.combo-text {
  flex: 1;
  padding-left: 5px;
  font-size: 16.6px;
  color: #b4b4b4;
}
.caret {
  width: 0;
  height: 0;
  margin-right: 8px;
  border-left: 4px solid transparent;
  border-right: 4px solid transparent;
  border-top: 5px solid #aaa;
}
.combo-btn {
  width: 36px;
  height: 26px;
  display: flex;
  align-items: center;
  justify-content: center;
  border-left: 1px solid #555;
  background: #1c1c1c;
}
.pencil {
  width: 29px;
  height: 28px;
  margin-left: -1px;
  border: 1px solid #666;
  border-radius: 5px;
  box-sizing: border-box;
  background: #444;
  display: flex;
  align-items: center;
  justify-content: center;
  position: relative;
  top: -1px;
}
.ticon {
  fill: none;
  stroke: #d0d0d0;
  flex: none;
  overflow: visible;
}
.ticon .fillc {
  fill: #ddd;
  stroke: none;
}
.ticon .bird {
  fill: #9a9a9a;
  stroke: none;
}
.ticon-text {
  fill: #c8c8c8;
  stroke: none;
  font-family: "Liberation Sans", Arial, sans-serif;
  font-weight: bold;
  text-anchor: middle;
}
.winbtns {
  margin-left: auto;
  margin-right: 11px;
  align-self: flex-start;
  display: flex;
  height: 22px;
}
.winbtn {
  width: 30px;
  height: 22px;
  box-sizing: border-box;
  display: flex;
  align-items: center;
  justify-content: center;
  background: linear-gradient(#7e7e7e, #5e5e5e);
  border: 1px solid #555;
  border-top: none;
  color: #333;
  font-size: 16px;
}
.wicon {
  fill: none;
  stroke: #333;
  stroke-width: 1.6;
}
.closebtn {
  background: linear-gradient(#c04a3a, #94392f);
  border-radius: 0 0 5px 0;
}

.toolbar {
  height: 40px;
  margin: 0 4px 0 3px;
  border-top: 1px solid #575757;
  display: flex;
  align-items: center;
  background: #272727;
}
.tool {
  flex: none;
  margin-left: 0;
  fill: none;
  stroke: #c8c8c8;
  stroke-width: 1.15;
  overflow: visible;
}
.tool:first-child {
  margin-left: -1px;
}
.tool.dim {
  stroke: #666;
}
.tool-fill {
  fill: #555;
  stroke: none;
}
.tool-caret {
  fill: #c8c8c8;
  stroke: none;
}
.tool-text {
  fill: #c8c8c8;
  stroke: none;
  font-family: "Liberation Sans", Arial, sans-serif;
}
.tool-serif {
  fill: #d2d2d2;
  stroke: none;
  font-family: "Liberation Serif", serif;
}
.tsep {
  width: 1px;
  height: 27px;
  margin: 0 5px;
  background: #555;
  flex: none;
}
.magnet,
.pin {
  display: flex;
  align-items: center;
  justify-content: center;
  height: 28px;
  width: 31px;
  box-sizing: border-box;
  border: 1px solid #555;
  border-radius: 5px;
  background: #050505;
}
.magnet {
  flex: none;
}
.pin {
  margin-left: auto;
  margin-right: 5px;
  width: 30px;
  background: linear-gradient(#222, #000);
}

.panes {
  margin-top: 5px;
  padding-left: 3px;
}
.main-pane {
  position: relative;
  height: 684px;
}
.main-pane svg,
.macd-pane svg,
.xaxis svg {
  display: block;
}
.plot {
  font-family: "Liberation Sans", Arial, sans-serif;
}
.grid {
  stroke: #2c2c2c;
  stroke-dasharray: 6 4;
}
.grid-major {
  stroke: #3e3e3e;
  stroke-dasharray: 7 4;
}
.grid-cross {
  stroke: #6a6a6a;
  stroke-dasharray: 4 3;
}
.zero {
  stroke: #777;
  stroke-dasharray: 4 3;
}
.curve {
  fill: none;
  stroke-width: 1;
  shape-rendering: crispEdges;
}
.blue {
  stroke: #1590ff;
}
.red {
  stroke: #f00000;
}
.orange {
  stroke: #ff6a00;
}
.under {
  font-size: 15.6px;
  fill: #b0b0b0;
}
.level-label {
  font-size: 16px;
  fill: #0a8cff;
}
.copy {
  font-size: 14.2px;
  fill: #b8b8b8;
}
.axis-label,
.date {
  font-family: "Liberation Sans", Arial, sans-serif;
  font-size: 15.6px;
  fill: #c8c8c8;
}
.date {
  font-weight: bold;
}
.tag-dark {
  fill: #111;
}
.tag-light {
  fill: #eee;
}
.tag-text {
  font-family: "Liberation Sans", Arial, sans-serif;
  font-size: 15.6px;
}

.readout {
  position: absolute;
  left: 5px;
  top: 1px;
  width: 248px;
  height: 538px;
  box-sizing: border-box;
  padding: 0 2px 0 1px;
  background: rgba(20, 58, 98, 0.58);
  border: 1px solid #2c4a62;
}
.row {
  height: 20px;
  line-height: 19px;
  display: flex;
  justify-content: space-between;
  white-space: nowrap;
}
.row.head {
  justify-content: center;
  font-weight: bold;
  color: #c8c8c8;
}

.tabs {
  height: 27px;
  display: flex;
  background: #000;
  border-top: 1px solid #555;
  box-sizing: border-box;
}
.tab {
  position: relative;
  box-sizing: border-box;
  padding: 0 0 0 10px;
  line-height: 27px;
  border-right: 1px solid #555;
  border-bottom: 1px solid #666;
  white-space: nowrap;
  color: #c0c0c0;
}
.tab.active {
  border-bottom: none;
}
.tab-x {
  position: absolute;
  right: 3px;
  top: -3px;
  font-size: 15px;
  line-height: 18px;
  color: #666;
}
.tab.active .tab-x {
  color: #ccc;
}
.tabs-rest {
  flex: 1;
  border-bottom: 1px solid #666;
}
.tabs-axis {
  width: 95px;
  border-left: 1px solid #777;
}

.macd-pane {
  height: 198px;
}
.xaxis {
  height: 24px;
  display: flex;
  background: #000;
  width: 1913px;
}
.dyn {
  width: 38px;
  padding-left: 2px;
  box-sizing: border-box;
  font-weight: bold;
  font-size: 17px;
  line-height: 26px;
  color: #ccc;
}
.lock {
  width: 24px;
  height: 23px;
  margin-right: 3px;
  box-sizing: border-box;
  border: 1px solid #999;
  background: #555;
  display: flex;
  align-items: center;
  justify-content: center;
}
</style>
